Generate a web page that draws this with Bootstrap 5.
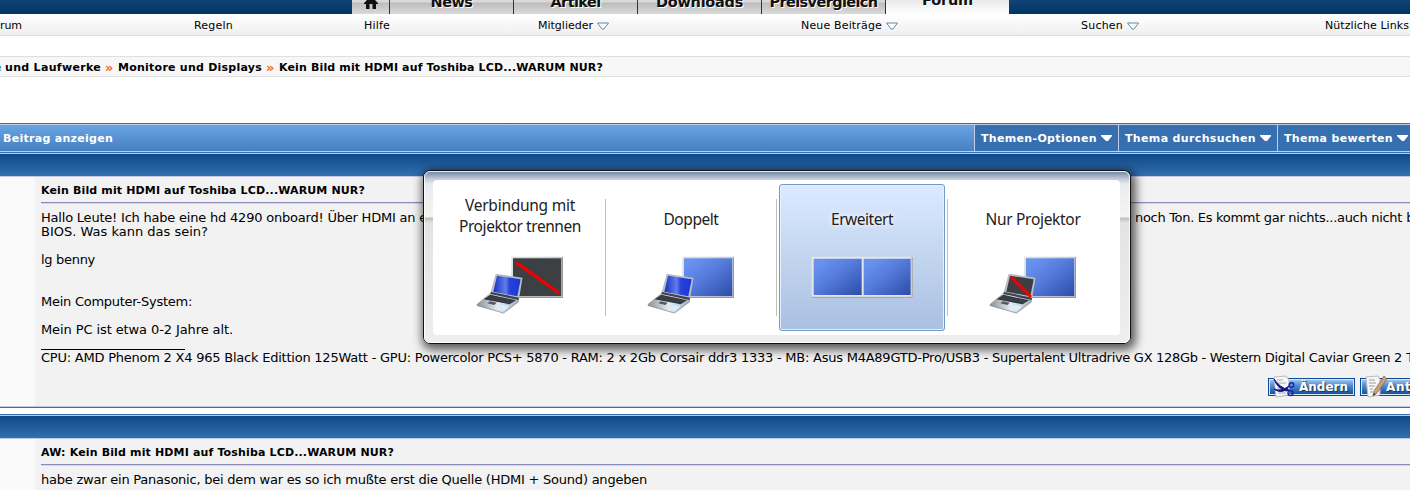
<!DOCTYPE html>
<html lang="de">
<head>
<meta charset="utf-8">
<title>Kein Bild mit HDMI auf Toshiba LCD</title>
<link rel="stylesheet" href="https://cdn.jsdelivr.net/npm/bootstrap@5.3.0/dist/css/bootstrap.min.css">
<style>
body{font:13px/14px Verdana,"DejaVu Sans",sans-serif;color:#000;background:#fff;width:1410px;height:490px;overflow:hidden;position:relative}
span{white-space:nowrap}
.topbar{height:14px;background:linear-gradient(#124377,#003366)}
.tabs{margin-left:352px;height:14px}
.tab{width:123px;margin-right:1px;height:14px;background:linear-gradient(#d9d9d9 0 2px,#bcbcbc 3px,#dadada);font:bold 14.5px/16px "DejaVu Sans",sans-serif;color:#111;text-shadow:1px 1px 0 #fff;overflow:hidden;display:flex;justify-content:center}
.tab span{margin-top:-6px}
.tab-home{width:37px}
.tab-on{background:linear-gradient(#e9e9e9,#fff);margin:0}
.tab-on span{margin-top:-8px}
.subnav{height:22px;background:linear-gradient(#fff,#efefef);border-bottom:1px solid #dcdcdc;font-size:11px;line-height:24px}
.subnav svg{margin-top:-1px}
.cellx{flex:none;white-space:nowrap}
.crumbs{margin-top:20px;height:21px;border:1px solid #dfdfdf;border-width:1px 0;background:#f7f7f7;font-size:11px;line-height:22px;font-weight:bold}
.crumbs b{color:#f60;font-weight:bold;font-size:13px}
.toolrow{margin-top:46px;height:30px;border-top:1px solid #3670b3;border-bottom:1px solid #3670b3;background:#c5cbe6;padding:1px 0;font-size:11px;font-weight:bold;line-height:28px;color:#fff}
.toolrow .lead-cell{width:974px;background:linear-gradient(#68a4e4,#4680c0);padding-left:3px}
.toolcell{background:#3670b0;margin-left:1px;padding-left:6px}
.toolcell svg{margin:-1px 0 0 4px}
.strip{height:24px;border:1px solid #c5c8e4;border-width:1px 0;background:linear-gradient(#0f4886,#3270b0)}
.side{width:35px;background:#fafafa;flex:none}
.post{background:#f2f2f2;padding-left:6px;flex:1;overflow:hidden}
.ttl{font-size:11px;font-weight:bold;line-height:27px;height:25px}
.rule{height:2px;background:#d4d6ec;border-top:1px solid #8a8ab8}
.first-part{display:inline-block;width:1094px}
.rowline{height:14px}
.sig{width:144px;height:14px;padding-top:13px}
.sig div{height:1px;margin-top:-1px;background:#000}
.actbtn{height:18px;border:1px solid #0b4a94;box-shadow:inset 0 0 0 1px #d7e8fb;background:linear-gradient(#a7c8f0,#4c86cd 45%,#0e4d9c);color:#fff;font-weight:bold;font-size:12px;line-height:16px;text-shadow:1px 1px 1px #234;flex:none}
.actbtn svg{margin:-3px 3px 0 2px;display:block;overflow:visible}
.osd{position:absolute;left:423px;top:170px;width:708px;height:174px;border:1px solid #111;border-radius:7px;box-shadow:2px 3px 10px 3px rgba(0,0,0,.62);
background:linear-gradient(#6882a4 0,#c3cbd8 8px,#e9ebed 13px,#f2f2f2 38px,#f4f4f4 46px,#bdbdbd 47px,#e3e3e3 52px,#eee);padding:9px 10px 8px 9px}
.osd::before{content:"";position:absolute;inset:0;border:1px solid rgba(255,255,255,.85);border-radius:6px}
.panel{position:relative;background:#fff;border-radius:4px;height:155px;padding:0 2px;font:15.5px/21px "Noto Sans",sans-serif;color:#222}
.opt{width:170px;height:155px;padding-top:29px;text-align:center;flex:none}
.opt.two{padding-top:15px}
.opt.two svg{margin-top:13px}
.opt svg{display:block;margin:20px auto 0}
.opt.sel{width:166px;margin:4px 2px 0;height:147px;padding-top:24px;border:1px solid #6f9acb;border-radius:3px;background:linear-gradient(#dbeaff,#a9c0e0);box-shadow:inset 0 0 0 1px #e5f0ff;text-shadow:0 0 5px #fff,0 0 9px #fff}
.opt.sel svg{margin-left:31px}
.divi{width:1px;height:117px;margin-top:19px;background:#bfbfbf;flex:none}
</style>
<script src="https://cdn.jsdelivr.net/npm/bootstrap@5.3.0/dist/js/bootstrap.bundle.min.js"></script>
</head>
<body>
<svg width="0" height="0" class="position-absolute">
<defs>
<linearGradient id="blue" x1="0" y1="0" x2="1" y2="1"><stop offset=".1" stop-color="#6a93ef"/><stop offset=".45" stop-color="#567cdc"/><stop offset="1" stop-color="#2c4ca8"/></linearGradient>
<linearGradient id="lap" x1="0" y1="0" x2="1" y2="0"><stop offset="0" stop-color="#1b30bb"/><stop offset=".45" stop-color="#5e7eee"/><stop offset=".6" stop-color="#2741d8"/><stop offset="1" stop-color="#1837dc"/></linearGradient>
<linearGradient id="frame" x1="0" y1="0" x2="1" y2="1"><stop offset="0" stop-color="#e0e0e0"/><stop offset="1" stop-color="#b4b4b0"/></linearGradient>
<linearGradient id="base" x1="0" y1="0" x2="1" y2="0"><stop offset="0" stop-color="#8d9094"/><stop offset=".5" stop-color="#e4ebf2"/><stop offset="1" stop-color="#a8b4c0"/></linearGradient>
<g id="screen"><path d="M124 20H279V144H124z" fill="url(#frame)"/><path d="M125 142.500H277.500V21" fill="none" stroke="#999" stroke-width="3"/><path d="M128 24H275V140H128z" fill="#eee"/></g>
<g id="laptop"><path d="M63 127L147 146 146 157 104 189Q101 191 97 190L22 168Q17 165 22 161z" fill="url(#base)"/><path d="M22 166L100 189 146 153" fill="none" stroke="#85898f" stroke-width="2"/><path d="M61 134L138 151 119 163 41 148z" fill="#30353c"/><path d="M52 144L128 158M58 139L132 154" stroke="#656b73" stroke-width="1"/><path d="M60 154L80 158 73 165 52 160z" fill="#555a60"/><path d="M97 165L118 169 102 182 81 177z" fill="#d5efff"/><path d="M77 71L156 83Q158 84 157 87L147 147 61 130z" fill="#b9bec6"/><path d="M63 126L147 143 146 150 61 132z" fill="#3b4250"/></g>
</defs></svg>

<div class="topbar"><div class="tabs d-flex">
<div class="tab tab-home"><svg width="18" height="10" viewBox="0 0 18 10"><path d="M2 3L9-4 16 3V4H14V9H10.500V4H7.500V9H4V4H2z" fill="#111"/></svg></div>
<div class="tab"><span data-w="42">News</span></div><div class="tab"><span data-w="50">Artikel</span></div><div class="tab"><span data-w="87">Downloads</span></div><div class="tab"><span data-w="108">Preisvergleich</span></div><div class="tab tab-on"><span data-w="51">Forum</span></div>
</div></div>
<div class="subnav d-flex">
<div class="cellx" style="width:194px"><span data-w="22">rum</span></div><div class="cellx" style="width:170px"><span data-w="39">Regeln</span></div><div class="cellx" style="width:174px"><span data-w="26">Hilfe</span></div>
<div class="cellx" style="width:263px"><span data-w="55">Mitglieder</span> <svg width="12" height="8"><path d="M.5 1H11.500L7 7H5z" fill="#fff" stroke="#5c88a8"/></svg></div>
<div class="cellx" style="width:280px"><span data-w="81">Neue Beiträge</span> <svg width="12" height="8"><path d="M.5 1H11.500L7 7H5z" fill="#fff" stroke="#5c88a8"/></svg></div>
<div class="cellx" style="width:244px"><span data-w="42">Suchen</span> <svg width="12" height="8"><path d="M.5 1H11.500L7 7H5z" fill="#fff" stroke="#5c88a8"/></svg></div>
<div class="cellx"><span data-w="84">Nützliche Links</span></div>
</div>
<div class="crumbs d-flex"><div class="cellx overflow-hidden" style="width:5px"><span style="margin-left:-6px;color:#2a80c0">e</span></div><div class="cellx" style="width:100px"><span data-w="96">und Laufwerke</span></div><div class="cellx" style="width:13px"><b>»</b></div><div class="cellx" style="width:148px"><span data-w="144">Monitore und Displays</span></div><div class="cellx" style="width:13px"><b>»</b></div><span data-w="324">Kein Bild mit HDMI auf Toshiba LCD...WARUM NUR?</span></div>

<div class="toolrow d-flex">
<div class="lead-cell"><span data-w="110">Beitrag anzeigen</span></div>
<div class="toolcell" style="width:143px"><span data-w="116">Themen-Optionen</span><svg width="11" height="7"><path d="M0 0H11V1L7 6H5L0 1z" fill="#fff"/></svg></div>
<div class="toolcell" style="width:158px"><span data-w="131">Thema durchsuchen</span><svg width="11" height="7"><path d="M0 0H11V1L7 6H5L0 1z" fill="#fff"/></svg></div>
<div class="toolcell flex-fill"><span data-w="109">Thema bewerten</span><svg width="11" height="7"><path d="M0 0H11V1L7 6H5L0 1z" fill="#fff"/></svg></div>
</div>
<div class="strip"></div>
<div class="d-flex" style="height:229px">
<div class="side"></div>
<div class="post">
<div class="ttl"><span data-w="324">Kein Bild mit HDMI auf Toshiba LCD...WARUM NUR?</span></div>
<div class="rule"></div>
<div style="height:7px"></div>
<div class="rowline text-nowrap"><div class="first-part"><span data-w="386">Hallo Leute! Ich habe eine hd 4290 onboard! Über HDMI an e</span></div><span data-w="267">noch Ton. Es kommt gar nichts...auch nicht</span> bi</div>
<div class="rowline"><span data-w="167">BIOS. Was kann das sein?</span></div>
<div class="rowline"></div>
<div class="rowline"><span data-w="54">lg benny</span></div>
<div class="rowline"></div><div class="rowline"></div>
<div class="rowline"><span data-w="151">Mein Computer-System:</span></div>
<div class="rowline"></div>
<div class="rowline"><span data-w="192">Mein PC ist etwa 0-2 Jahre alt.</span></div>
<div class="sig"><div></div></div>
<div class="rowline text-nowrap"><span data-w="339">CPU: AMD Phenom 2 X4 965 Black Edittion 125Watt -&nbsp;</span><span data-w="612">GPU: Powercolor PCS+ 5870 - RAM: 2 x 2Gb Corsair ddr3 1333 - MB: Asus M4A89GTD-Pro/USB3 -&nbsp;</span><span data-w="410">Supertalent Ultradrive GX 128Gb - Western Digital Caviar Green 2</span> TB</div>
<div class="d-flex" style="margin:13px 0 0 1227px;gap:5px">
<div class="actbtn d-flex" style="width:87px"><svg width="25" height="22"><path d="M3 1L15 0 18 4V19L5 21z" fill="#f7f7f7" stroke="#bbb"/><path d="M6 4H12M6 7H15M6 12H9M7 15H10M7 17H15" stroke="#aaa"/><path d="M3 3Q9 12 18 14L15 15Q6 12 3 3zM3 13Q10 16 18 10L16 13Q10 18 3 13z" fill="#111a80" stroke="#111a80"/><circle cx="20.500" cy="9" r="2.300" fill="none" stroke="#1a28a8" stroke-width="1.500"/><circle cx="19.500" cy="17" r="2.500" fill="none" stroke="#1a28a8" stroke-width="1.500"/></svg><span data-w="49">Ändern</span></div>
<div class="actbtn d-flex" style="width:110px"><svg width="20" height="22"><path d="M3 1L15 0 17 4V19L5 21z" fill="#f7f7f7" stroke="#bbb"/><path d="M6 4H12M6 7H13M6 10H12M7 13H10M7 16H10" stroke="#999"/><path d="M21 0L24 3 14 17 10 20 11 15z" fill="#c9a078" stroke="#80604a" stroke-width=".7"/><path d="M10 20L11 17 12.500 18z" fill="#222"/></svg><span data-w="77">Antworten</span></div>
</div>
</div></div>
<div style="height:1px;background:#c5c8e4"></div>
<div style="height:1px;background:#3670b3"></div>
<div style="height:6px"></div>
<div style="height:1px;background:#3670b3"></div>
<div class="strip"></div>
<div class="d-flex" style="height:52px"><div class="side"></div><div class="post">
<div class="ttl"><span data-w="353">AW: Kein Bild mit HDMI auf Toshiba LCD...WARUM NUR?</span></div><div class="rule"></div>
<div style="height:7px"></div><div class="rowline"><span data-w="606">habe zwar ein Panasonic, bei dem war es so ich mußte erst die Quelle (HDMI + Sound) angeben</span></div>
</div></div>

<div class="osd"><div class="panel d-flex">
<div class="opt two"><span data-w="110">Verbindung mit</span><br><span data-w="122">Projektor trennen</span>
<svg width="100" height="70" viewBox="0 0 300 210"><use href="#screen"/><path d="M129 25H274V139H129z" fill="#3c4043"/><path d="M142 40L263 126" stroke="#f00000" stroke-width="10" stroke-linecap="round"/><use href="#laptop"/><path d="M81 77L152 88 142 139 70 125z" fill="url(#lap)"/></svg></div>
<div class="divi"></div>
<div class="opt"><span data-w="55">Doppelt</span>
<svg width="100" height="70" viewBox="0 0 300 210"><use href="#screen"/><path d="M129 25H274V139H129z" fill="url(#blue)"/><use href="#laptop"/><path d="M81 77L152 88 142 139 70 125z" fill="url(#lap)"/></svg></div>
<div class="divi"></div>
<div class="opt sel"><span data-w="62">Erweitert</span>
<svg width="102" height="70" viewBox="0 0 306 210"><path d="M2 20H305V144H2z" fill="#e6e6e6"/><path d="M2 142H303.500V21" fill="none" stroke="#999" stroke-width="3"/><path d="M8 26H152V135H8z" fill="url(#blue)"/><path d="M158 26H299V135H158z" fill="url(#blue)"/></svg></div>
<div class="divi"></div>
<div class="opt"><span data-w="95">Nur Projektor</span>
<svg width="100" height="70" viewBox="0 0 300 210"><use href="#screen"/><path d="M129 25H274V139H129z" fill="url(#blue)"/><use href="#laptop"/><path d="M81 77L152 88 142 139 70 125z" fill="#3c3e42"/><path d="M86 83L141 138" stroke="#f00000" stroke-width="9" stroke-linecap="round"/></svg></div>
</div></div>
<script>
/* spread each label to the width given in data-w */
document.querySelectorAll('[data-w]').forEach(function(e){
  var w=e.getBoundingClientRect().width;
  e.style.letterSpacing=((+e.dataset.w-w)/e.textContent.length)+'px';
});
</script>
</body>
</html>
